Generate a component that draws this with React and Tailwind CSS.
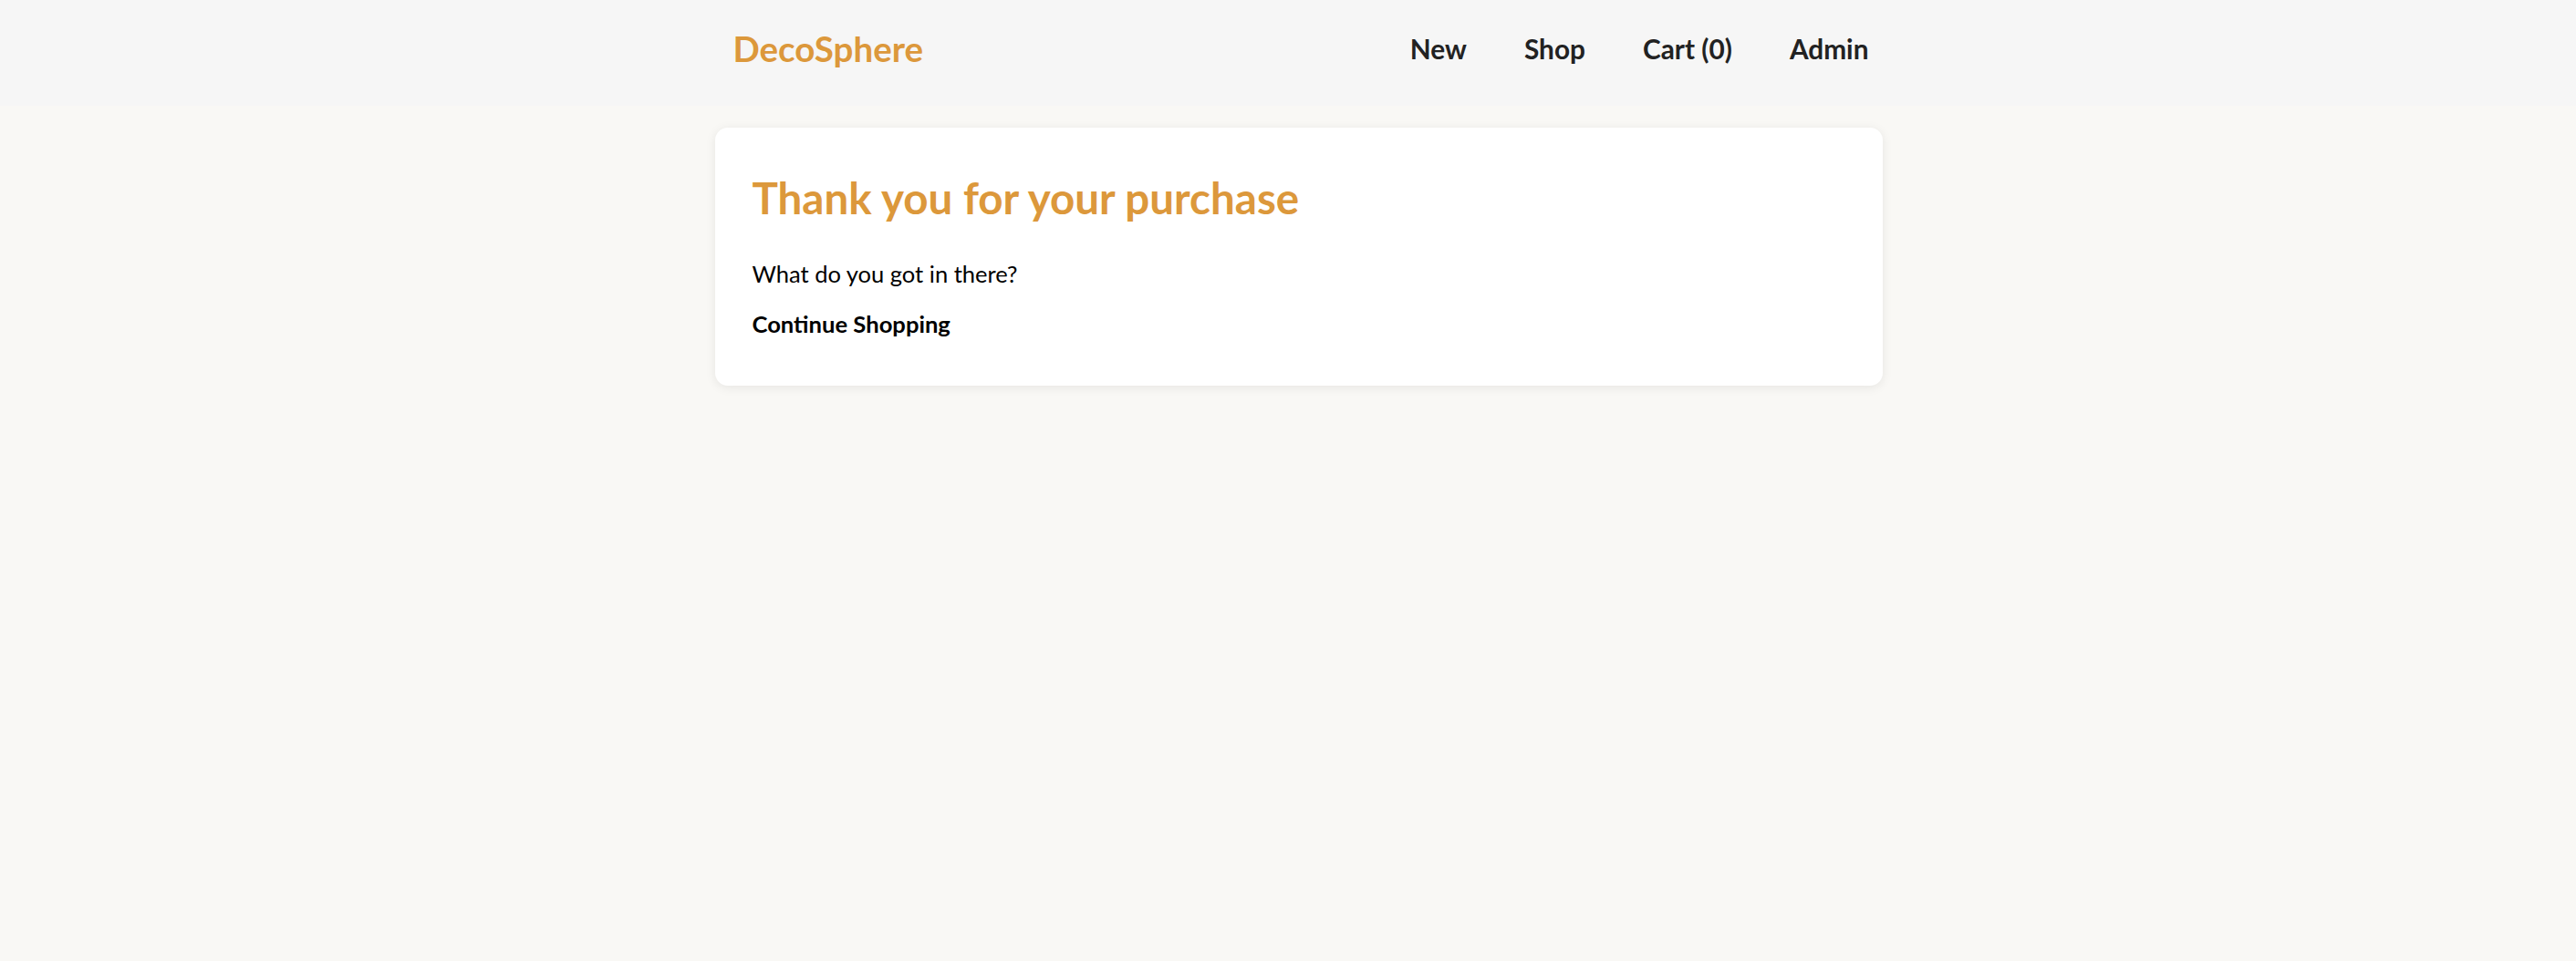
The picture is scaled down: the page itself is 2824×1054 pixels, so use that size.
import React from 'react';

const navLinks = ['New', 'Shop', 'Cart (0)', 'Admin'];

const Header = () => (
  <header className="h-[116px] bg-[#f6f6f6] pb-[9px] flex justify-center pl-[23px]">
    <div className="w-[1280px] h-full pl-[20px] pr-[15px] flex items-center justify-between">
      <a href="#" className="text-[38.5px] leading-none font-bold text-[#dc983b]">DecoSphere</a>
      <nav className="flex items-center gap-[63px]">
        {navLinks.map((link) => (
          <a key={link} href="#" className="text-[29.8px] leading-none font-bold text-[#222222]">
            {link}
          </a>
        ))}
      </nav>
    </div>
  </header>
);

const App = () => {
  return (
    <div className="min-h-[1054px] bg-[#f9f8f5] font-['Lato',sans-serif]">
      <Header />
      <main className="flex justify-center pl-[23px] pt-[24px]">
        <div className="w-[1280px] bg-white rounded-[14px] shadow-[0_2px_12px_rgba(0,0,0,0.08)] px-[41px] pt-[53px] pb-[54px]">
          <h1 className="text-[47.5px] leading-none font-bold text-[#dc983b]">Thank you for your purchase</h1>
          <p className="mt-[47px] text-[25.5px] leading-none text-black">What do you got in there?</p>
          <a href="#" className="block mt-[30px] text-[25.6px] leading-none font-bold text-black">Continue Shopping</a>
        </div>
      </main>
    </div>
  );
};

export default App;
